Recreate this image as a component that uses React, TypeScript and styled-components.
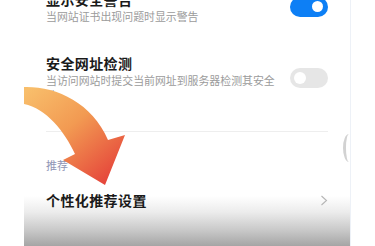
import React from "react";
import styled, { createGlobalStyle } from "styled-components";

const Global = createGlobalStyle`
  html, body { margin: 0; padding: 0; background: #fff; }
  body { width: 375px; height: 246px; overflow: hidden; font-family: "Noto Sans CJK SC", "Noto Sans", sans-serif; }
`;

const Page = styled.div`
  position: relative;
  display: flex;
  width: 375px;
  height: 246px;
  overflow: hidden;
  background: #fff;
`;

const Gutter = styled.div<{ $w: number }>`
  width: ${(p) => p.$w}px;
  flex: none;
  background: #fff;
`;

const Screen = styled.div`
  position: relative;
  width: 326px;
  flex: none;
  height: 246px;
  box-sizing: border-box;
  padding: 0 22px;
  background: linear-gradient(
    to bottom,
    #fff 0,
    #fff 196px,
    #ececec 212px,
    #c9c9c9 230px,
    #a5a5a5 246px
  );
`;

const Edge = styled.div`
  width: 1px;
  flex: none;
  background: #edf1f7;
`;

const List = styled.div`
  display: flex;
  flex-direction: column;
  margin-top: -11px;
`;

const Row = styled.div<{ $mt?: number }>`
  display: flex;
  align-items: center;
  justify-content: space-between;
  margin-top: ${(p) => p.$mt ?? 0}px;
`;

const TextCol = styled.div`
  display: flex;
  flex-direction: column;
  width: 236px;
`;

const Title = styled.div`
  font-size: 14px;
  line-height: 20px;
  font-weight: 700;
  letter-spacing: 0.4px;
  color: #1a1a1a;
  white-space: nowrap;
`;

const Sub = styled.div`
  font-size: 10.9px;
  line-height: 15px;
  color: #9b9b9b;
`;

const Toggle = styled.div<{ $on: boolean }>`
  position: relative;
  width: 38px;
  height: 20px;
  border-radius: 10px;
  flex: none;
  background: ${(p) => (p.$on ? "#0d7ff5" : "#e6e6e6")};
  &::after {
    content: "";
    position: absolute;
    top: ${(p) => (p.$on ? 4.5 : 4)}px;
    ${(p) => (p.$on ? "right: 5px;" : "left: 4px;")}
    width: ${(p) => (p.$on ? 11 : 12)}px;
    height: ${(p) => (p.$on ? 11 : 12)}px;
    border-radius: 50%;
    background: #fff;
  }
`;

const Divider = styled.div`
  height: 1px;
  background: #eeeeee;
  margin-top: 28px;
`;

const Header = styled.div`
  font-size: 11px;
  line-height: 15px;
  color: #8f95b5;
  margin-top: 26px;
`;

const Arc = styled.div`
  position: absolute;
  left: 343px;
  top: 134px;
  width: 12px;
  height: 28px;
  border-left: 3px solid #d2d2d2;
  border-radius: 50%;
  box-sizing: border-box;
`;

const ArrowSvg = styled.svg`
  position: absolute;
  left: 0;
  top: 0;
  pointer-events: none;
`;

const Chevron = () => (
  <svg width="8" height="11" viewBox="0 0 8 11">
    <polyline points="1.5,1 6.5,5.5 1.5,10" fill="none" stroke="#b5b5b5" strokeWidth="1.1" />
  </svg>
);

export default function App() {
  return (
    <>
      <Global />
      <Page>
        <Gutter $w={24} />
        <Screen>
          <List>
            <Row>
              <TextCol>
                <Title>显示安全警告</Title>
                <Sub>当网站证书出现问题时显示警告</Sub>
              </TextCol>
              <Toggle $on />
            </Row>
            <Row $mt={29}>
              <TextCol>
                <Title>安全网址检测</Title>
                <Sub>当访问网站时提交当前网址到服务器检测其安全性</Sub>
              </TextCol>
              <Toggle $on={false} />
            </Row>
            <Divider />
            <Header>推荐</Header>
            <Row $mt={17}>
              <Title>个性化推荐设置</Title>
              <Chevron />
            </Row>
          </List>
        </Screen>
        <Edge />
        <Gutter $w={24} />
        <Arc />
        <ArrowSvg width="375" height="246" viewBox="0 0 375 246">
          <defs>
            <linearGradient id="ag" x1="30" y1="88" x2="110" y2="182" gradientUnits="userSpaceOnUse">
              <stop offset="0" stopColor="#f8be6b" />
              <stop offset="0.45" stopColor="#f29a52" />
              <stop offset="1" stopColor="#e5433a" />
            </linearGradient>
          </defs>
          <path
            d="M24,87 C55,86 92,102 108,140 L125,135 L105,185 L63,160 L75,154 C65,132 46,108 24,104 Z"
            fill="url(#ag)"
          />
        </ArrowSvg>
      </Page>
    </>
  );
}
